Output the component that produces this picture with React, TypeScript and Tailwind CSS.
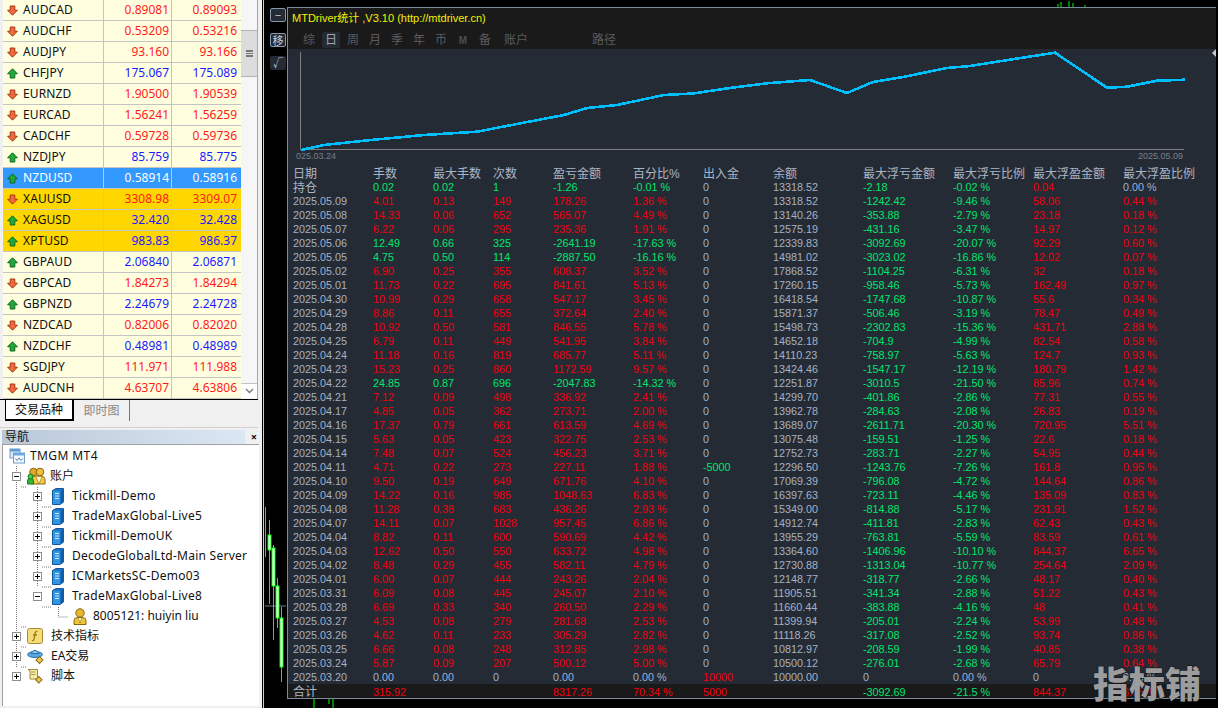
import type { ReactNode } from 'react';

type Quote = { symbol: string; bid: string; ask: string; up: boolean; tone?: 'selected' | 'gold' };

const quotes: Quote[] = [
  { symbol: 'AUDCAD', bid: '0.89081', ask: '0.89093', up: false },
  { symbol: 'AUDCHF', bid: '0.53209', ask: '0.53216', up: false },
  { symbol: 'AUDJPY', bid: '93.160', ask: '93.166', up: false },
  { symbol: 'CHFJPY', bid: '175.067', ask: '175.089', up: true },
  { symbol: 'EURNZD', bid: '1.90500', ask: '1.90539', up: false },
  { symbol: 'EURCAD', bid: '1.56241', ask: '1.56259', up: false },
  { symbol: 'CADCHF', bid: '0.59728', ask: '0.59736', up: false },
  { symbol: 'NZDJPY', bid: '85.759', ask: '85.775', up: true },
  { symbol: 'NZDUSD', bid: '0.58914', ask: '0.58916', up: true, tone: 'selected' },
  { symbol: 'XAUUSD', bid: '3308.98', ask: '3309.07', up: false, tone: 'gold' },
  { symbol: 'XAGUSD', bid: '32.420', ask: '32.428', up: true, tone: 'gold' },
  { symbol: 'XPTUSD', bid: '983.83', ask: '986.37', up: true, tone: 'gold' },
  { symbol: 'GBPAUD', bid: '2.06840', ask: '2.06871', up: true },
  { symbol: 'GBPCAD', bid: '1.84273', ask: '1.84294', up: false },
  { symbol: 'GBPNZD', bid: '2.24679', ask: '2.24728', up: true },
  { symbol: 'NZDCAD', bid: '0.82006', ask: '0.82020', up: false },
  { symbol: 'NZDCHF', bid: '0.48981', ask: '0.48989', up: true },
  { symbol: 'SGDJPY', bid: '111.971', ask: '111.988', up: false },
  { symbol: 'AUDCNH', bid: '4.63707', ask: '4.63806', up: false },
];

const headers = ['日期', '手数', '最大手数', '次数', '盈亏金额', '百分比%', '出入金', '余额', '最大浮亏金额', '最大浮亏比例', '最大浮盈金额', '最大浮盈比例'];

const rows: string[][] = [
  ['持仓', '0.02', '0.02', '1', '-1.26', '-0.01 %', '0', '13318.52', '-2.18', '-0.02 %', '0.04', '0.00 %'],
  ['2025.05.09', '4.01', '0.13', '149', '178.26', '1.36 %', '0', '13318.52', '-1242.42', '-9.46 %', '58.06', '0.44 %'],
  ['2025.05.08', '14.33', '0.06', '652', '565.07', '4.49 %', '0', '13140.26', '-353.88', '-2.79 %', '23.18', '0.18 %'],
  ['2025.05.07', '6.22', '0.06', '295', '235.36', '1.91 %', '0', '12575.19', '-431.16', '-3.47 %', '14.97', '0.12 %'],
  ['2025.05.06', '12.49', '0.66', '325', '-2641.19', '-17.63 %', '0', '12339.83', '-3092.69', '-20.07 %', '92.29', '0.60 %'],
  ['2025.05.05', '4.75', '0.50', '114', '-2887.50', '-16.16 %', '0', '14981.02', '-3023.02', '-16.86 %', '12.02', '0.07 %'],
  ['2025.05.02', '6.90', '0.25', '355', '608.37', '3.52 %', '0', '17868.52', '-1104.25', '-6.31 %', '32', '0.18 %'],
  ['2025.05.01', '11.73', '0.22', '695', '841.61', '5.13 %', '0', '17260.15', '-958.46', '-5.73 %', '162.49', '0.97 %'],
  ['2025.04.30', '10.99', '0.29', '658', '547.17', '3.45 %', '0', '16418.54', '-1747.68', '-10.87 %', '55.6', '0.34 %'],
  ['2025.04.29', '8.86', '0.11', '655', '372.64', '2.40 %', '0', '15871.37', '-506.46', '-3.19 %', '78.47', '0.49 %'],
  ['2025.04.28', '10.92', '0.50', '581', '846.55', '5.78 %', '0', '15498.73', '-2302.83', '-15.36 %', '431.71', '2.88 %'],
  ['2025.04.25', '6.79', '0.11', '449', '541.95', '3.84 %', '0', '14652.18', '-704.9', '-4.99 %', '82.54', '0.58 %'],
  ['2025.04.24', '11.18', '0.16', '819', '685.77', '5.11 %', '0', '14110.23', '-758.97', '-5.63 %', '124.7', '0.93 %'],
  ['2025.04.23', '15.23', '0.25', '860', '1172.59', '9.57 %', '0', '13424.46', '-1547.17', '-12.19 %', '180.79', '1.42 %'],
  ['2025.04.22', '24.85', '0.87', '696', '-2047.83', '-14.32 %', '0', '12251.87', '-3010.5', '-21.50 %', '85.96', '0.74 %'],
  ['2025.04.21', '7.12', '0.09', '498', '336.92', '2.41 %', '0', '14299.70', '-401.86', '-2.86 %', '77.31', '0.55 %'],
  ['2025.04.17', '4.85', '0.05', '362', '273.71', '2.00 %', '0', '13962.78', '-284.63', '-2.08 %', '26.83', '0.19 %'],
  ['2025.04.16', '17.37', '0.79', '661', '613.59', '4.69 %', '0', '13689.07', '-2611.71', '-20.30 %', '720.95', '5.51 %'],
  ['2025.04.15', '5.63', '0.05', '423', '322.75', '2.53 %', '0', '13075.48', '-159.51', '-1.25 %', '22.6', '0.18 %'],
  ['2025.04.14', '7.48', '0.07', '524', '456.23', '3.71 %', '0', '12752.73', '-283.71', '-2.27 %', '54.95', '0.44 %'],
  ['2025.04.11', '4.71', '0.22', '273', '227.11', '1.88 %', '-5000', '12296.50', '-1243.76', '-7.26 %', '161.8', '0.95 %'],
  ['2025.04.10', '9.50', '0.19', '649', '671.76', '4.10 %', '0', '17069.39', '-796.08', '-4.72 %', '144.64', '0.86 %'],
  ['2025.04.09', '14.22', '0.16', '985', '1048.63', '6.83 %', '0', '16397.63', '-723.11', '-4.46 %', '135.09', '0.83 %'],
  ['2025.04.08', '11.28', '0.38', '683', '436.26', '2.93 %', '0', '15349.00', '-814.88', '-5.17 %', '231.91', '1.52 %'],
  ['2025.04.07', '14.11', '0.07', '1028', '957.45', '6.86 %', '0', '14912.74', '-411.81', '-2.83 %', '62.43', '0.43 %'],
  ['2025.04.04', '8.82', '0.11', '600', '590.69', '4.42 %', '0', '13955.29', '-763.81', '-5.59 %', '83.59', '0.61 %'],
  ['2025.04.03', '12.62', '0.50', '550', '633.72', '4.98 %', '0', '13364.60', '-1406.96', '-10.10 %', '844.37', '6.65 %'],
  ['2025.04.02', '8.48', '0.29', '455', '582.11', '4.79 %', '0', '12730.88', '-1313.04', '-10.77 %', '254.64', '2.09 %'],
  ['2025.04.01', '6.00', '0.07', '444', '243.26', '2.04 %', '0', '12148.77', '-318.77', '-2.66 %', '48.17', '0.40 %'],
  ['2025.03.31', '6.09', '0.08', '445', '245.07', '2.10 %', '0', '11905.51', '-341.34', '-2.88 %', '51.22', '0.43 %'],
  ['2025.03.28', '6.69', '0.33', '340', '260.50', '2.29 %', '0', '11660.44', '-383.88', '-4.16 %', '48', '0.41 %'],
  ['2025.03.27', '4.53', '0.08', '279', '281.68', '2.53 %', '0', '11399.94', '-205.01', '-2.24 %', '53.99', '0.48 %'],
  ['2025.03.26', '4.62', '0.11', '233', '305.29', '2.82 %', '0', '11118.26', '-317.08', '-2.52 %', '93.74', '0.86 %'],
  ['2025.03.25', '6.66', '0.08', '248', '312.85', '2.98 %', '0', '10812.97', '-208.59', '-1.99 %', '40.85', '0.38 %'],
  ['2025.03.24', '5.87', '0.09', '207', '500.12', '5.00 %', '0', '10500.12', '-276.01', '-2.68 %', '65.79', '0.64 %'],
  ['2025.03.20', '0.00', '0.00', '0', '0.00', '0.00 %', '10000', '10000.00', '0', '0.00 %', '0', '0.00 %'],
];

const totals = ['合计', '315.92', '', '', '8317.26', '70.34 %', '5000', '', '-3092.69', '-21.5 %', '844.37', '6.65 %'];

const tabs = ['综', '日', '周', '月', '季', '年', '币'];

const RED = 'text-[#f0000c]';
const GREEN = 'text-[#00e66c]';
const BLUE = 'text-[#98b4dc]';
const GREY = 'text-[#a6b2c4]';

function cellColor(value: string, col: number, row: string[]) {
  if (col === 0 || col === 7) return GREY;
  if (value === '0' || value === '0.00' || value === '0.00 %') return BLUE;
  if (col >= 1 && col <= 5) return row[4].startsWith('-') ? GREEN : RED;
  return value.startsWith('-') ? GREEN : RED;
}

function Arrow({ up }: { up: boolean }) {
  return (
    <svg width="11" height="11" viewBox="0 0 11 11" className="shrink-0">
      {up ? (
        <path d="M5.5 .8 10.4 5.8H7.8V10H3.2V5.8H.6Z" fill="#22a83a" stroke="#0c6a1e" strokeWidth="1" />
      ) : (
        <path d="M3.2 1H7.8V5.2H10.4L5.5 10.2 .6 5.2H3.2Z" fill="#ee6a3c" stroke="#a83414" strokeWidth="1" />
      )}
    </svg>
  );
}

function QuoteRow({ q }: { q: Quote }) {
  const bg = q.tone === 'selected' ? 'bg-[#3399ff]' : q.tone === 'gold' ? 'bg-[#ffd700]' : 'bg-[#ffffe0]';
  const price = q.tone === 'selected' ? 'text-white' : q.up ? 'text-[#1a1aff]' : 'text-[#ff1a1a]';
  return (
    <div className={`flex h-[21px] border-b border-[#c4c4c4] ${bg}`}>
      <div className={`flex w-[101px] items-center gap-[5px] border-r border-[#c4c4c4] pl-[4px] ${q.tone === 'selected' ? 'text-white' : 'text-[#111]'}`}>
        <Arrow up={q.up} />
        <span className="tracking-[0.1px]">{q.symbol}</span>
      </div>
      <div className={`w-[68px] border-r border-[#c4c4c4] pr-[2px] text-right leading-[20px] ${price}`}>{q.bid}</div>
      <div className={`flex-1 pr-[4px] text-right leading-[20px] ${price}`}>{q.ask}</div>
    </div>
  );
}

function MarketWatch() {
  return (
    <div className="flex h-[400px] w-[258px] border-b border-black pl-[3px]">
      <div className="w-[238px] overflow-hidden">
        {quotes.map((q) => (
          <QuoteRow key={q.symbol} q={q} />
        ))}
      </div>
      <div className="relative flex w-[17px] flex-col border-r border-[#a8a8a8] bg-[#f6f6f6]">
        <div className="mt-[30px] flex h-[47px] items-center justify-center border-y border-[#b4b4b4] bg-[#dcdcdc]">
          <div className="h-[7px] w-[7px] border-y-2 border-[#777] bg-[linear-gradient(#dcdcdc_0_1px,#777_1px_2px,#dcdcdc_2px)]" />
        </div>
        <div className="absolute bottom-[1px] left-0 flex h-[15px] w-full items-center justify-center border-t border-[#c4c4c4] bg-white">
          <svg width="9" height="6" viewBox="0 0 9 6">
            <path d="M1 1 4.5 4.5 8 1" fill="none" stroke="#777" strokeWidth="1.4" />
          </svg>
        </div>
      </div>
    </div>
  );
}

function WatchTabs() {
  return (
    <div className="flex h-[28px] w-[258px] items-start border-b border-[#d0d0d0] pl-[5px]">
      <div className="flex h-[21px] w-[69px] items-center justify-center border-r-2 border-b-2 border-l border-black bg-white text-[12px] text-[#111]">交易品种</div>
      <div className="flex h-[21px] w-[56px] items-center justify-center border-r border-[#777] text-[12px] text-[#888]">即时图</div>
    </div>
  );
}

function TerminalIcon() {
  return (
    <svg width="16" height="16" viewBox="0 0 16 16">
      <rect x="1" y="1" width="10" height="9" fill="#dceaf8" stroke="#6f9cc8" />
      <rect x="1" y="1" width="10" height="2.5" fill="#5d9ad6" />
      <rect x="4.5" y="5" width="11" height="10" fill="#f4f9ff" stroke="#6f9cc8" />
      <rect x="4.5" y="5" width="11" height="2.5" fill="#6ea8e0" />
      <path d="M6.5 10.5 8 12.5 10 10 12 12.5 14 10.5" fill="none" stroke="#5b82b0" />
    </svg>
  );
}

function UsersIcon() {
  return (
    <svg width="19" height="18" viewBox="0 0 19 18">
      <circle cx="6.5" cy="5" r="3.8" fill="#e0a92a" stroke="#8a6510" />
      <circle cx="13" cy="5" r="3.8" fill="#f0c03a" stroke="#8a6510" />
      <path d="M4 17V13Q4 9 8 9H13Q18 9 18 13V17Z" fill="#f2cc4a" stroke="#8a6510" />
      <path d="M9 10 12 17 15 10" fill="#fff4c0" stroke="#8a6510" strokeWidth=".6" />
      <path d="M.5 17V14Q.5 11 3.5 11T6.5 14V17Z" fill="#35b53a" stroke="#1a7a1e" />
      <circle cx="3.5" cy="9.5" r="2.5" fill="#45c94a" stroke="#1a7a1e" />
    </svg>
  );
}

function ServerIcon() {
  return (
    <svg width="12" height="17" viewBox="0 0 12 17">
      <path d="M.5 2.5 4 .5H11.5V14L8 16.5H.5Z" fill="#1e78c8" stroke="#155a9c" />
      <rect x="1" y="3" width="7.5" height="13" fill="#2f96e4" />
      <path d="M8.5 3 11.5 1V14L8.5 16Z" fill="#0f5ea8" />
      <path d="M3 5.5H7M3 8H7M3 10.5H7" stroke="#c8e8ff" strokeWidth="1.2" />
    </svg>
  );
}

function UserIcon() {
  return (
    <svg width="14" height="17" viewBox="0 0 14 17">
      <circle cx="7" cy="5" r="4.2" fill="#e8b52e" stroke="#8a6510" />
      <path d="M1 16.5V13Q1 9.5 4.5 9.5H9.5Q13 9.5 13 13V16.5Z" fill="#f0c63c" stroke="#8a6510" />
      <path d="M5 10 7 15 9 10" fill="#fff4c0" stroke="#8a6510" strokeWidth=".6" />
    </svg>
  );
}

function IndicatorIcon() {
  return (
    <svg width="16" height="16" viewBox="0 0 16 16">
      <rect x=".5" y=".5" width="15" height="15" rx="2" fill="#f4dc7a" stroke="#a88a30" />
      <path d="M10.5 3.5Q8.5 3 8 5.5L7 11Q6.5 13 5 12.5M6 7H10" fill="none" stroke="#a07c10" strokeWidth="1.3" />
    </svg>
  );
}

function ExpertIcon() {
  return (
    <svg width="18" height="16" viewBox="0 0 18 16">
      <ellipse cx="8" cy="6.5" rx="7.5" ry="3" fill="#58a8e0" stroke="#2a6ea8" />
      <path d="M4 5.5Q8 -1 12 5.5Z" fill="#8ccaf0" stroke="#2a6ea8" />
      <rect x="10" y="9.5" width="5" height="5" transform="rotate(45 12.5 12)" fill="#e8c858" stroke="#8a6e18" />
    </svg>
  );
}

function ScriptIcon() {
  return (
    <svg width="16" height="16" viewBox="0 0 16 16">
      <path d="M1 1.5H10.5V11H3V3Z" fill="#f8eaa8" stroke="#a08a3a" />
      <path d="M4 4H8.5M4 6.5H8.5" stroke="#b09a48" />
      <rect x="9.5" y="9.5" width="4.6" height="4.6" transform="rotate(45 11.8 11.8)" fill="#e8c858" stroke="#8a6e18" />
    </svg>
  );
}

function Box({ open }: { open: boolean }) {
  return (
    <span className="relative block h-[9px] w-[9px] shrink-0 border border-[#8f8f8f] bg-white">
      <span className="absolute top-[3px] left-[1px] h-px w-[5px] bg-black" />
      {!open && <span className="absolute top-[1px] left-[3px] h-[5px] w-px bg-black" />}
    </span>
  );
}

function TreeRow({ pad, box, icon, children }: { pad: string; box?: 'open' | 'closed'; icon: ReactNode; children: ReactNode }) {
  return (
    <div className={`flex h-[20px] items-center ${pad}`}>
      {box && <Box open={box === 'open'} />}
      {icon}
      <span className="whitespace-nowrap text-[#111]">{children}</span>
    </div>
  );
}

const servers = ['Tickmill-Demo', 'TradeMaxGlobal-Live5', 'Tickmill-DemoUK', 'DecodeGlobalLtd-Main Server', 'ICMarketsSC-Demo03'];

function Navigator() {
  return (
    <div className="flex h-[278px] flex-col pt-[2px] pl-[2px]">
      <div className="flex h-[14px] w-[258px] items-center justify-between">
        <div className="flex h-[14px] w-[243px] items-center bg-[linear-gradient(90deg,#b9c8d8,#dbe7f3)] pl-[3px] text-[12px] leading-[14px] text-[#111]">导航</div>
        <span className="pr-[3px] text-[11px] leading-[14px] font-bold text-[#111]">×</span>
      </div>
      <div className="relative w-[257px] flex-1 border-t border-l border-[#a0a0a0] bg-white pt-[1px]">
        <svg className="absolute top-0 left-0" width="100" height="260">
          <g stroke="#777" strokeDasharray="1 1" fill="none">
            <path d="M13.5 21V222" />
            <path d="M34.5 42V142" />
            <path d="M55.5 162V172H65" />
            <path d="M18 42H24M18 222H24M18 202H24M18 182H24" />
            <path d="M39 62H48M39 82H48M39 102H48M39 122H48M39 142H48M39 162H48" />
          </g>
        </svg>
        <div className="relative">
          <TreeRow pad="pl-[6px]" icon={<TerminalIcon />}>
            <span className="pl-[5px] tracking-[0.4px]">TMGM MT4</span>
          </TreeRow>
          <TreeRow pad="gap-[6px] pl-[9px]" box="open" icon={<UsersIcon />}>
            <span className="-ml-[2px]">账户</span>
          </TreeRow>
          {servers.map((s) => (
            <TreeRow key={s} pad="gap-[10px] pl-[30px]" box="closed" icon={<ServerIcon />}>
              <span className="-ml-[2px] tracking-[0.26px]">{s}</span>
            </TreeRow>
          ))}
          <TreeRow pad="gap-[10px] pl-[30px]" box="open" icon={<ServerIcon />}>
            <span className="-ml-[2px] tracking-[0.26px]">TradeMaxGlobal-Live8</span>
          </TreeRow>
          <TreeRow pad="pl-[70px]" icon={<UserIcon />}>
            <span className="pl-[6px]">8005121: huiyin liu</span>
          </TreeRow>
          <TreeRow pad="gap-[6px] pl-[9px]" box="closed" icon={<IndicatorIcon />}>
            <span className="pl-[2px]">技术指标</span>
          </TreeRow>
          <TreeRow pad="gap-[6px] pl-[9px]" box="closed" icon={<ExpertIcon />}>
            <span>EA交易</span>
          </TreeRow>
          <TreeRow pad="gap-[6px] pl-[9px]" box="closed" icon={<ScriptIcon />}>
            <span className="pl-[2px]">脚本</span>
          </TreeRow>
        </div>
      </div>
    </div>
  );
}

function ChartBackdrop() {
  return (
    <svg className="absolute top-0 left-0" width="954" height="708">
      <path d="M1.5 0V708" stroke="#cfcfcf" />
      <path d="M3 606H24" stroke="#6f8296" />
      <g stroke="#00ff00" fill="#fff" strokeWidth="1">
        <path d="M3.5 507V557M7.5 520V604M11.5 545V640M15.5 578V628M19.5 607V682" fill="none" />
        <rect x="6" y="535" width="3" height="15" />
        <rect x="10" y="548" width="3" height="38" />
        <rect x="14" y="586" width="3" height="32" />
        <rect x="18" y="618" width="3" height="49" />
        <path d="M52 699V708M67 699V704M71 699V708" fill="none" />
        <path d="M796 4V7M799 2V7M807 1V7M811 3V7M823 5V7" fill="none" />
      </g>
    </svg>
  );
}

function SideButtons() {
  return (
    <div className="flex w-[17px] flex-col pt-[1px] font-['Noto_Sans_CJK_SC',sans-serif]">
      <div className="flex h-[14px] w-[16px] items-center justify-center rounded-[2px] border border-[#8795a8] bg-[#242b35] text-[11px] leading-none text-[#c8d0dc]">−</div>
      <div className="mt-[11px] flex h-[14px] w-[16px] items-center justify-center rounded-[2px] border border-[#8795a8] bg-[#242b35] text-[11px] leading-none text-[#c8d0dc]">移</div>
      <div className="mt-[9px] flex h-[14px] w-[16px] items-center justify-center rounded-[2px] bg-[#242b35] text-[10px] leading-none text-[#c8d0dc]">√</div>
    </div>
  );
}

function TitleBar() {
  return (
    <div className="h-[41px] bg-[#1a1a1a]">
      <div className="h-[23px] pl-[4px] text-[11px] leading-[21px] text-[#f0f000]">MTDriver统计 ,V3.10 (http://mtdriver.cn)</div>
      <div className="flex h-[18px] items-center pl-[12px] text-[12px] leading-[19px] text-[#5c5c5c]">
        {tabs.map((t, i) => (
          <span key={t} className={`mr-[4px] flex h-[16px] w-[18px] items-center justify-center rounded-[2px] ${i === 1 ? 'bg-[#242b35] text-[#a0a8b4]' : ''}`}>
            {t}
          </span>
        ))}
        <span className="mr-[4px] flex w-[18px] justify-center text-[10px] font-bold text-[#44505c]">M</span>
        <span className="mr-[10px] flex w-[18px] justify-center">备</span>
        <span className="w-[38px]">账户</span>
        <span className="ml-[50px]">路径</span>
      </div>
    </div>
  );
}

const equity =
  '13,101 36,96 83,91 136,86 189,82.7 229,75 276,66 299,59 329,56 376,46 405,44.5 442,39 482,34 522,31 559,44 585,33 615,28 659,19 682,17 739,8 767,3.7 819,38.7 839,37.7 869,31.7 897,30.7';

function EquityChart() {
  return (
    <div className="relative h-[117px] bg-[#242b35]">
      <svg className="absolute top-0 left-0" width="928" height="117">
        <path d="M12.5 3V100.5H896" stroke="#7e7e7e" fill="none" />
        <polyline points={equity} fill="none" stroke="#00bfff" strokeWidth="2.6" shapeRendering="crispEdges" />
      </svg>
      <span className="absolute top-[102px] left-[8px] text-[9px] leading-[11px] text-[#77808c]">025.03.24</span>
      <span className="absolute top-[102px] right-[33px] text-[9px] leading-[11px] text-[#77808c]">2025.05.09</span>
    </div>
  );
}

const gridCols = 'grid grid-cols-[80px_60px_60px_60px_80px_70px_70px_90px_90px_80px_90px_1fr] pl-[5px]';

function StatsTable() {
  return (
    <div className="text-[10.8px] leading-[14px]">
      <div className={`${gridCols} h-[14px] text-[12px] leading-[16px] text-[#aab6c8]`}>
        {headers.map((h) => (
          <span key={h} className="whitespace-nowrap">{h}</span>
        ))}
      </div>
      {rows.map((row) => (
        <div key={row[0]} className={`${gridCols} h-[14px]`}>
          {row.map((v, i) => (
            <span key={i} className={`whitespace-nowrap ${i === 0 && v === '持仓' ? 'text-[12px] leading-[16px] text-[#aab6c8]' : cellColor(v, i, row)}`}>{v}</span>
          ))}
        </div>
      ))}
      <div className={`${gridCols} h-[14px] bg-[#1a1a1a] leading-[16px]`}>
        {totals.map((v, i) => (
          <span key={i} className={`whitespace-nowrap ${i === 0 ? 'text-[12px] text-[#aab6c8]' : cellColor(v, i, totals)}`}>{v}</span>
        ))}
      </div>
    </div>
  );
}

export default function App() {
  return (
    <div className="flex h-[708px] w-[1218px] overflow-hidden bg-black font-['Liberation_Sans','Noto_Sans_CJK_SC',sans-serif]">
      <aside className="h-full w-[262px] shrink-0 bg-[#f0f0f0] font-['Noto_Sans','Noto_Sans_CJK_SC',sans-serif] text-[12px]">
        <MarketWatch />
        <WatchTabs />
        <Navigator />
      </aside>
      <main className="relative flex flex-1 pt-[7px] pl-[8px]">
        <ChartBackdrop />
        <SideButtons />
        <div className="relative h-[692px] w-[929px] border-y border-l border-[#7c8a9c] bg-[#242b35]">
          <TitleBar />
          <EquityChart />
          <StatsTable />
          <div className="absolute top-[41px] right-0 h-0 w-0 border-y-[4px] border-r-[4px] border-y-transparent border-r-[#c8c8c8]" />
        </div>
        <div className="absolute top-[660px] left-[831px] font-['Noto_Sans_CJK_SC',sans-serif] text-[36px] leading-[44px] font-black whitespace-nowrap text-[#9c9c9c] [-webkit-text-stroke:1px_#111] [paint-order:stroke_fill]">指标铺</div>
      </main>
    </div>
  );
}
